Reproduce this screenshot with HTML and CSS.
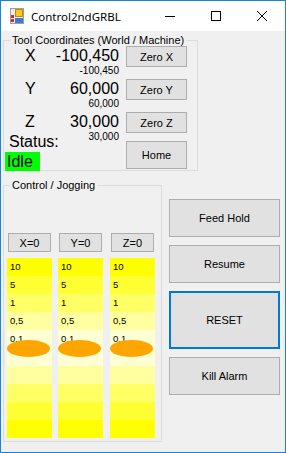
FILE: index.html
```html
<!DOCTYPE html>
<html>
<head>
<meta charset="utf-8">
<link rel="stylesheet" href="styles.css">
</head>
<body>
<div class="window">
  <div class="titlebar">
    <svg class="appicon" width="14" height="16" viewBox="0 0 14 16">
      <rect x="0.5" y="0.5" width="13" height="15" fill="#ececec" stroke="#a0a0a0"/>
      <rect x="5.5" y="1.5" width="7" height="7" fill="#f8c820" stroke="#c98a00"/>
      <rect x="1" y="7" width="3" height="3" fill="#d42a2a"/>
      <rect x="1" y="11" width="3" height="3" fill="#d42a2a"/>
      <rect x="5" y="10" width="8" height="5" fill="#3a78d8"/>
    </svg>
    <span class="title">Control2ndGRBL</span>
    <div class="caption-btns">
      <div class="cap"><svg width="10" height="10" viewBox="0 0 10 10"><path d="M0 5.5H10" stroke="#000" stroke-width="1"/></svg></div>
      <div class="cap"><svg width="10" height="10" viewBox="0 0 10 10"><rect x="0.5" y="0.5" width="9" height="9" fill="none" stroke="#000" stroke-width="1"/></svg></div>
      <div class="cap"><svg width="10" height="10" viewBox="0 0 10 10"><path d="M0 0L10 10M10 0L0 10" stroke="#000" stroke-width="1"/></svg></div>
    </div>
  </div>
  <div class="client">
    <div class="group g1">
      <div class="legend">Tool Coordinates (World / Machine)</div>
      <div class="coords">
        <div class="col-letters">
          <div class="letter">X</div>
          <div class="letter">Y</div>
          <div class="letter last">Z</div>
          <div class="status">Status:</div>
          <div class="idle">Idle</div>
        </div>
        <div class="col-values">
          <div class="val"><div class="big">-100,450</div><div class="small">-100,450</div></div>
          <div class="val"><div class="big">60,000</div><div class="small">60,000</div></div>
          <div class="val"><div class="big">30,000</div><div class="small">30,000</div></div>
        </div>
        <div class="col-buttons">
          <button class="btn zero">Zero X</button>
          <button class="btn zero">Zero Y</button>
          <button class="btn zero last">Zero Z</button>
          <button class="btn home">Home</button>
        </div>
      </div>
    </div>
    <div class="lower">
      <div class="group g2">
        <div class="legend">Control / Jogging</div>
        <div class="jog">
          <div class="jogcol">
            <button class="btn axisbtn">X=0</button>
            <div class="bar">
              <div class="band c1">10</div>
              <div class="band c2">5</div>
              <div class="band c3">1</div>
              <div class="band c4">0,5</div>
              <div class="band c5">0,1</div>
              <div class="band c5"></div>
              <div class="band c4"></div>
              <div class="band c3"></div>
              <div class="band c2"></div>
              <div class="band c1"></div>
              <div class="knob"></div>
            </div>
          </div>
          <div class="jogcol">
            <button class="btn axisbtn">Y=0</button>
            <div class="bar">
              <div class="band c1">10</div>
              <div class="band c2">5</div>
              <div class="band c3">1</div>
              <div class="band c4">0,5</div>
              <div class="band c5">0,1</div>
              <div class="band c5"></div>
              <div class="band c4"></div>
              <div class="band c3"></div>
              <div class="band c2"></div>
              <div class="band c1"></div>
              <div class="knob"></div>
            </div>
          </div>
          <div class="jogcol">
            <button class="btn axisbtn">Z=0</button>
            <div class="bar">
              <div class="band c1">10</div>
              <div class="band c2">5</div>
              <div class="band c3">1</div>
              <div class="band c4">0,5</div>
              <div class="band c5">0,1</div>
              <div class="band c5"></div>
              <div class="band c4"></div>
              <div class="band c3"></div>
              <div class="band c2"></div>
              <div class="band c1"></div>
              <div class="knob"></div>
            </div>
          </div>
        </div>
      </div>
      <div class="actions">
        <button class="btn act">Feed Hold</button>
        <button class="btn act">Resume</button>
        <button class="btn act reset">RESET</button>
        <button class="btn act">Kill Alarm</button>
      </div>
    </div>
  </div>
</div>
</body>
</html>
```
FILE: styles.css
```css
html, body {
  margin: 0;
  padding: 0;
  background: #f0f0f0;
}
body {
  font-family: "Liberation Sans", Arial, sans-serif;
  color: #000;
}
.window {
  width: 286px;
  height: 453px;
  box-sizing: border-box;
  border: 1px solid #1883d7;
  background: #f0f0f0;
  display: flex;
  flex-direction: column;
  overflow: hidden;
}
.titlebar {
  height: 30px;
  flex: none;
  background: #fff;
  display: flex;
  align-items: center;
}
.appicon {
  margin-left: 9px;
  display: block;
}
.title {
  margin-left: 7px;
  font-family: "Noto Sans", "Open Sans", sans-serif;
  font-size: 11.5px;
  color: #000;
}
.caption-btns {
  margin-left: auto;
  display: flex;
}
.cap {
  width: 46px;
  height: 30px;
  display: flex;
  align-items: center;
  justify-content: center;
}
.cap svg {
  display: block;
}
.client {
  flex: 1;
}
.group {
  box-sizing: border-box;
  border: 1px solid #dcdcdc;
  margin-left: 2px;
}
.legend {
  font-size: 11px;
  line-height: 13px;
  margin: -7px 0 0 6px;
  padding: 0 2px;
  background: #f0f0f0;
  width: fit-content;
  white-space: nowrap;
}
.g1 {
  margin-top: 9px;
  width: 195px;
  height: 131px;
}
.coords {
  display: flex;
  align-items: flex-start;
}
.col-letters {
  width: 48px;
  display: flex;
  flex-direction: column;
}
.letter {
  font-size: 16px;
  line-height: 18px;
  padding-left: 21px;
  margin-bottom: 15px;
}
.letter.last {
  margin-bottom: 2px;
}
.status {
  font-size: 16px;
  line-height: 18px;
  padding-left: 5px;
}
.idle {
  margin: 1px 0 0 1px;
  width: 35px;
  height: 19px;
  box-sizing: border-box;
  background: #00ff00;
  font-size: 16px;
  line-height: 19px;
  padding-left: 2px;
}
.col-values {
  width: 67px;
  text-align: right;
  white-space: nowrap;
}
.val {
  margin-bottom: 3px;
}
.big {
  font-size: 16px;
  line-height: 18px;
}
.small {
  font-size: 10px;
  line-height: 12px;
}
.col-buttons {
  margin-left: 7px;
  margin-top: -1px;
  width: 61px;
  display: flex;
  flex-direction: column;
}
.btn {
  font-family: "Liberation Sans", Arial, sans-serif;
  font-size: 11px;
  color: #000;
  background: #e1e1e1;
  border: 1px solid #adadad;
  padding: 0;
  margin: 0;
  box-sizing: border-box;
  display: block;
}
.zero {
  width: 61px;
  height: 21px;
  margin-bottom: 12px;
}
.zero.last {
  margin-bottom: 8px;
}
.home {
  width: 61px;
  height: 28px;
}
.lower {
  display: flex;
  align-items: flex-start;
  margin-top: 14px;
}
.g2 {
  width: 159px;
  height: 257px;
}
.jog {
  display: flex;
  margin-top: 41px;
  padding-left: 3px;
}
.jogcol {
  width: 45px;
  display: flex;
  flex-direction: column;
}
.jogcol + .jogcol {
  margin-left: 6px;
}
.jogcol:nth-child(3) {
  margin-left: 7px;
}
.axisbtn {
  width: 43px;
  height: 19px;
  margin-left: 1px;
}
.bar {
  margin-top: 6px;
  position: relative;
  height: 180px;
  display: flex;
  flex-direction: column;
}
.band {
  height: 18px;
  font-size: 9.5px;
  line-height: 18px;
  padding-left: 3px;
  box-sizing: border-box;
}
.c1 { background: #ffff00; }
.c2 { background: #ffff33; }
.c3 { background: #ffff66; }
.c4 { background: #ffffa0; }
.c5 { background: #ffffd4; }
.knob {
  position: absolute;
  left: 0;
  top: 82px;
  width: 43px;
  height: 17px;
  border-radius: 50%;
  background: #ffa500;
}
.actions {
  margin-left: 7px;
  margin-top: 14px;
  display: flex;
  flex-direction: column;
}
.act {
  width: 111px;
  height: 38px;
  margin-bottom: 8px;
}
.reset {
  height: 58px;
  border: 2px solid #0078d7;
}
```
